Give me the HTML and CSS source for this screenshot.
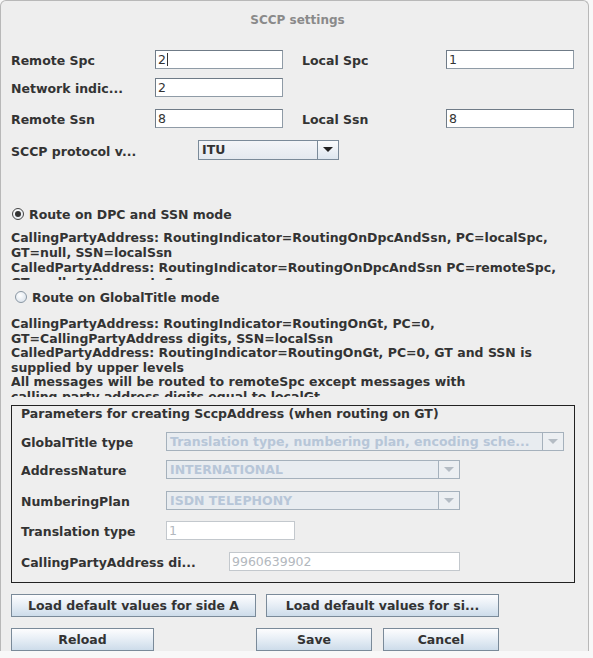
FILE: index.html
```html
<!DOCTYPE html>
<html>
<head>
<meta charset="utf-8">
<link rel="stylesheet" href="styles.css">
</head>
<body>
<div class="window">
  <div class="titlebar">SCCP settings</div>
  <div class="content">
    <div class="grid row r1">
      <span class="lbl">Remote Spc</span>
      <span class="tf">2<i class="caret"></i></span>
      <span></span>
      <span class="lbl">Local Spc</span>
      <span class="tf">1</span>
    </div>
    <div class="grid row r2">
      <span class="lbl">Network indic...</span>
      <span class="tf">2</span>
    </div>
    <div class="grid row r3">
      <span class="lbl">Remote Ssn</span>
      <span class="tf">8</span>
      <span></span>
      <span class="lbl">Local Ssn</span>
      <span class="tf">8</span>
    </div>
    <div class="row r4">
      <span class="lbl proto">SCCP protocol v...</span>
      <span class="combo itu"><span class="cv">ITU</span><span class="arr"><svg width="10" height="6" viewBox="0 0 10 6"><path d="M0 0H10L5 5Z" fill="#222"/></svg></span></span>
    </div>

    <div class="radio rd1"><span class="rb on"></span><span class="lbl">Route on DPC and SSN mode</span></div>
    <div class="txt t1">CallingPartyAddress: RoutingIndicator=RoutingOnDpcAndSsn, PC=localSpc,<br>GT=null, SSN=localSsn<br>CalledPartyAddress: RoutingIndicator=RoutingOnDpcAndSsn PC=remoteSpc,<br>GT=null, SSN=remoteSsn</div>

    <div class="radio rd2"><span class="rb"></span><span class="lbl">Route on GlobalTitle mode</span></div>
    <div class="txt t2">CallingPartyAddress: RoutingIndicator=RoutingOnGt, PC=0,<br>GT=CallingPartyAddress digits, SSN=localSsn<br>CalledPartyAddress: RoutingIndicator=RoutingOnGt, PC=0, GT and SSN is<br>supplied by upper levels<br>All messages will be routed to remoteSpc except messages with<br>calling party address digits equal to localGt</div>

    <div class="group">
      <div class="gtitle">Parameters for creating SccpAddress (when routing on GT)</div>
      <div class="grow g1">
        <span class="lbl">GlobalTitle type</span>
        <span class="combo dis wide"><span class="cv">Translation type, numbering plan, encoding sche...</span><span class="arr"><svg width="10" height="6" viewBox="0 0 10 6"><path d="M0 0H10L5 5Z" fill="#b4bcc4"/></svg></span></span>
      </div>
      <div class="grow g2">
        <span class="lbl">AddressNature</span>
        <span class="combo dis mid"><span class="cv">INTERNATIONAL</span><span class="arr"><svg width="10" height="6" viewBox="0 0 10 6"><path d="M0 0H10L5 5Z" fill="#b4bcc4"/></svg></span></span>
      </div>
      <div class="grow g3">
        <span class="lbl">NumberingPlan</span>
        <span class="combo dis mid"><span class="cv">ISDN TELEPHONY</span><span class="arr"><svg width="10" height="6" viewBox="0 0 10 6"><path d="M0 0H10L5 5Z" fill="#b4bcc4"/></svg></span></span>
      </div>
      <div class="grow g4">
        <span class="lbl">Translation type</span>
        <span class="tf distf tt">1</span>
      </div>
      <div class="grow g5">
        <span class="lbl cpa">CallingPartyAddress di...</span>
        <span class="tf distf digits">9960639902</span>
      </div>
    </div>

    <div class="btns b1">
      <span class="btn bA">Load default values for side A</span>
      <span class="btn bB">Load default values for si...</span>
    </div>
    <div class="btns b2">
      <span class="btn reload">Reload</span>
      <span class="btn save">Save</span>
      <span class="btn cancel">Cancel</span>
    </div>
  </div>
</div>
</body>
</html>
```
FILE: styles.css
```css
html, body {
  margin: 0;
  padding: 0;
  background: #f8f8f8;
}
body {
  font-family: "DejaVu Sans", sans-serif;
  font-size: 12.5px;
  color: #333333;
}
.window {
  width: 589px;
  height: 651px;
  box-sizing: border-box;
  background: #eeeeee;
  border: 1px solid #b8b8b8;
  border-bottom: none;
  border-radius: 6px 6px 0 0;
  overflow: hidden;
}
.titlebar {
  height: 38px;
  display: flex;
  align-items: center;
  justify-content: center;
  font-weight: bold;
  color: #8a8a8a;
  font-size: 12px;
  padding-left: 6px;
  padding-bottom: 2px;
}
.content {
  padding-left: 10px;
}
.lbl {
  font-weight: bold;
  color: #333;
  white-space: nowrap;
  padding-top: 2px;
}
.row {
  height: 19px;
  align-items: center;
}
.grid {
  display: grid;
  grid-template-columns: 144px 128px 19px 144px 128px;
}
.r1 { margin-top: 9px; }
.r2 { margin-top: 9px; }
.r3 { margin-top: 12px; }
.r4 {
  margin-top: 12px;
  height: 20px;
  display: flex;
}
.proto { width: 187px; }
.tf {
  box-sizing: border-box;
  height: 19px;
  background: #fff;
  border: 1px solid #8f9ba6;
  border-top-color: #6f7b87;
  border-left-color: #6f7b87;
  padding-left: 2px;
  line-height: 17px;
  color: #333;
  display: flex;
  align-items: center;
}
.caret {
  display: inline-block;
  width: 1px;
  height: 13px;
  background: #333;
  margin-left: 1px;
}
.combo {
  box-sizing: border-box;
  display: flex;
  height: 20px;
  border: 1px solid #7a8a99;
  background: linear-gradient(#f3f5f8, #e4e9ef);
}
.combo .cv {
  flex: 1;
  font-weight: bold;
  padding-left: 3px;
  line-height: 18px;
  white-space: nowrap;
  overflow: hidden;
}
.combo .arr {
  width: 20px;
  border-left: 1px solid #7a8a99;
  display: flex;
  align-items: center;
  justify-content: center;
  background: linear-gradient(#fbfcfd, #dde6ef);
}
.itu { width: 141px; }

.radio {
  display: flex;
  align-items: center;
  height: 18px;
}
.radio .lbl { padding-top: 0; }
.rd1 { margin-top: 45px; padding-left: 1px; gap: 5px; }
.rd2 { margin-top: 8px; padding-left: 4px; gap: 5px; }
.rb {
  box-sizing: border-box;
  width: 12px;
  height: 12px;
  border-radius: 50%;
  border: 1px solid #8a97a3;
  background: radial-gradient(circle at 40% 35%, #ffffff, #d3dde8);
  display: flex;
  align-items: center;
  justify-content: center;
}
.rb.on {
  border-color: #444;
  background: radial-gradient(circle at 40% 35%, #ffffff, #dfe6ee);
}
.rb.on::after {
  content: "";
  width: 6px;
  height: 6px;
  border-radius: 50%;
  background: #333;
}
.txt {
  font-weight: bold;
  white-space: nowrap;
  overflow: hidden;
  color: #333;
}
.t1 {
  margin-top: 7px;
  line-height: 15px;
  height: 50px;
}
.t2 {
  margin-top: 11px;
  line-height: 14.6px;
  height: 80px;
}
.group {
  margin-top: 8px;
  width: 564px;
  height: 178px;
  box-sizing: border-box;
  border: 1px solid #222;
  padding-left: 9px;
}
.gtitle {
  font-weight: bold;
  line-height: 15px;
  height: 15px;
}
.grow {
  display: flex;
  align-items: center;
  height: 19px;
}
.grow .lbl { width: 145px; }
.grow .cpa { width: 208px; }
.g1 { margin-top: 11px; }
.g2 { margin-top: 9px; }
.g3 { margin-top: 12px; }
.g4 { margin-top: 11px; }
.g5 { margin-top: 12px; }
.combo.dis {
  height: 19px;
  border-color: #a5b1bc;
  background: #e8ecf0;
}
.combo.dis .cv {
  color: #b7c6d8;
  line-height: 17px;
}
.combo.dis .arr {
  border-left-color: #a5b1bc;
  background: #eceff2;
}
.wide { width: 398px; }
.mid { width: 294px; }
.distf {
  border: 1px solid #c3c8cd;
  color: #b3b8be;
}
.tt { width: 129px; }
.digits { width: 231px; }
.btns {
  display: flex;
  height: 23px;
}
.b1 { margin-top: 11px; }
.b2 { margin-top: 11px; }
.btn {
  box-sizing: border-box;
  height: 23px;
  border: 1px solid #7a8a99;
  background: linear-gradient(#fdfdfe 0%, #e8eff6 45%, #cddcea 100%);
  font-weight: bold;
  color: #333;
  display: flex;
  align-items: center;
  justify-content: center;
  white-space: nowrap;
}
.bA { width: 245px; }
.bB { width: 233px; margin-left: 10px; }
.reload { width: 143px; }
.save { width: 116px; margin-left: 102px; }
.cancel { width: 116px; margin-left: 11px; }
```
